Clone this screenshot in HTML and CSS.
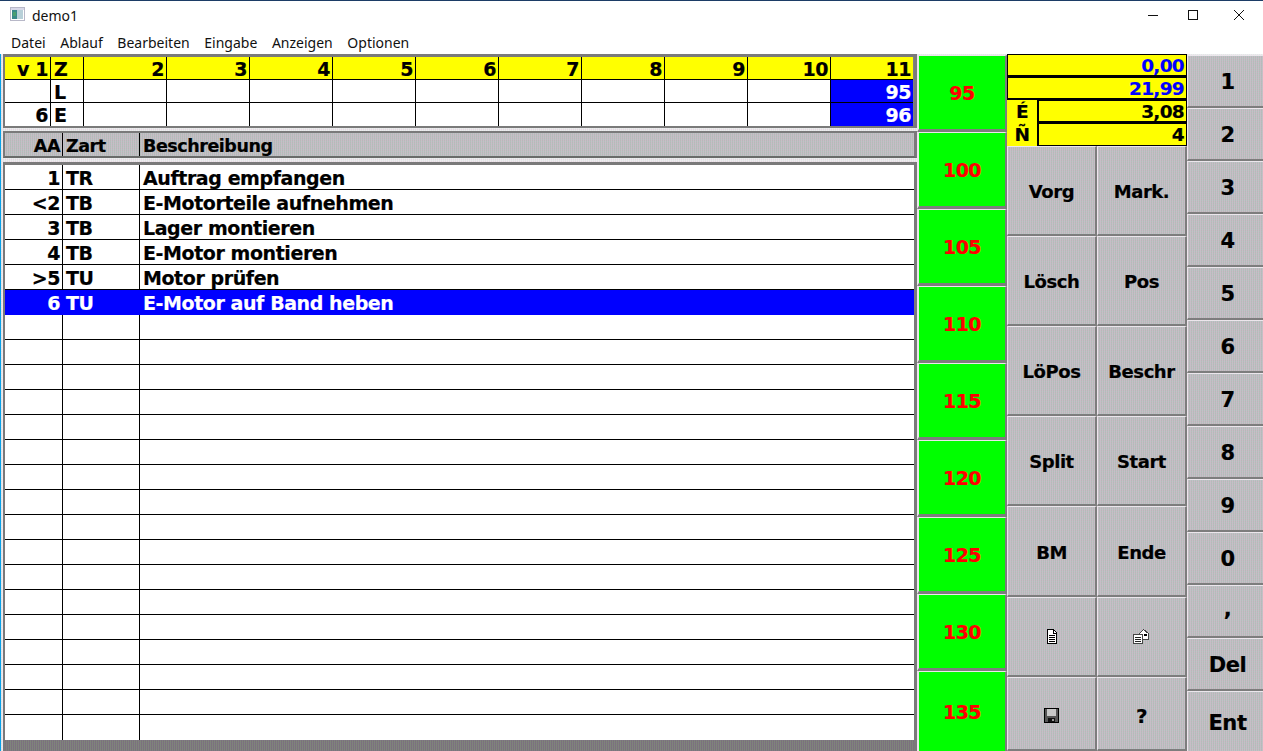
FILE: index.html
```html
<!DOCTYPE html>
<html lang="de">
<head>
<meta charset="utf-8">
<title>demo1</title>
<link rel="stylesheet" href="styles.css">
</head>
<body>
<div class="window">
  <header class="titlebar">
    <svg class="appicon" width="16" height="16" viewBox="0 0 16 16" shape-rendering="crispEdges"><rect x="0.5" y="0.5" width="14" height="13" fill="#fff" stroke="#b8b8c8"/><rect x="1" y="1" width="13" height="2" fill="#d8d8e8"/><rect x="2" y="3" width="5" height="9" fill="#3a8a8a"/><rect x="7" y="3" width="6" height="9" fill="#b8d0d8"/><rect x="3" y="5" width="3" height="4" fill="#4aa070"/></svg>
    <span class="apptitle">demo1</span>
    <div class="winctl">
      <svg width="12" height="12" viewBox="0 0 12 12" shape-rendering="crispEdges"><rect x="1" y="6" width="10" height="1" fill="#111"/></svg>
      <svg width="12" height="12" viewBox="0 0 12 12" shape-rendering="crispEdges"><rect x="1.5" y="1.5" width="9" height="9" fill="none" stroke="#111"/></svg>
      <svg width="12" height="12" viewBox="0 0 12 12"><path d="M1 1L11 11M11 1L1 11" stroke="#111" stroke-width="1"/></svg>
    </div>
  </header>
  <nav class="menubar"><span>Datei</span><span>Ablauf</span><span>Bearbeiten</span><span>Eingabe</span><span>Anzeigen</span><span>Optionen</span></nav>
  <main class="main">
    <section class="left">
      <div class="panel toppanel">
        <div class="tgrid">
          <div class="c y r">v 1</div><div class="c y">Z</div><div class="c y r">2</div><div class="c y r">3</div><div class="c y r">4</div><div class="c y r">5</div><div class="c y r">6</div><div class="c y r">7</div><div class="c y r">8</div><div class="c y r">9</div><div class="c y r">10</div><div class="c y r">11</div>
          <div class="c"></div><div class="c">L</div><div class="c"></div><div class="c"></div><div class="c"></div><div class="c"></div><div class="c"></div><div class="c"></div><div class="c"></div><div class="c"></div><div class="c"></div><div class="c b r">95</div>
          <div class="c r">6</div><div class="c">E</div><div class="c"></div><div class="c"></div><div class="c"></div><div class="c"></div><div class="c"></div><div class="c"></div><div class="c"></div><div class="c"></div><div class="c"></div><div class="c b r">96</div>
        </div>
      </div>
      <div class="panel headpanel">
        <div class="row head"><div class="r">AA</div><div>Zart</div><div>Beschreibung</div></div>
      </div>
      <div class="panel datapanel">
        <div class="row"><div class="r">1</div><div>TR</div><div>Auftrag empfangen</div></div>
        <div class="row"><div class="r">&lt;2</div><div>TB</div><div>E-Motorteile aufnehmen</div></div>
        <div class="row"><div class="r">3</div><div>TB</div><div>Lager montieren</div></div>
        <div class="row"><div class="r">4</div><div>TB</div><div>E-Motor montieren</div></div>
        <div class="row"><div class="r">&gt;5</div><div>TU</div><div>Motor prüfen</div></div>
        <div class="row sel"><div class="r">6</div><div>TU</div><div>E-Motor auf Band heben</div></div>
        <div class="row"><div></div><div></div><div></div></div>
        <div class="row"><div></div><div></div><div></div></div>
        <div class="row"><div></div><div></div><div></div></div>
        <div class="row"><div></div><div></div><div></div></div>
        <div class="row"><div></div><div></div><div></div></div>
        <div class="row"><div></div><div></div><div></div></div>
        <div class="row"><div></div><div></div><div></div></div>
        <div class="row"><div></div><div></div><div></div></div>
        <div class="row"><div></div><div></div><div></div></div>
        <div class="row"><div></div><div></div><div></div></div>
        <div class="row"><div></div><div></div><div></div></div>
        <div class="row"><div></div><div></div><div></div></div>
        <div class="row"><div></div><div></div><div></div></div>
        <div class="row"><div></div><div></div><div></div></div>
        <div class="row"><div></div><div></div><div></div></div>
        <div class="row"><div></div><div></div><div></div></div>
        <div class="row"><div></div><div></div><div></div></div>
      </div>
    </section>
    <section class="greens">
      <button class="gbtn">95</button><button class="gbtn">100</button><button class="gbtn">105</button><button class="gbtn">110</button><button class="gbtn">115</button><button class="gbtn">120</button><button class="gbtn">125</button><button class="gbtn">130</button><button class="gbtn gbtn-last">135</button>
    </section>
    <section class="mid">
      <div class="info">
        <div class="irow blue">0,00</div>
        <div class="irow blue">21,99</div>
        <div class="isplit"><span class="ilabel">É</span><span class="ival">3,08</span></div>
        <div class="isplit"><span class="ilabel">Ñ</span><span class="ival">4</span></div>
      </div>
      <div class="keys">
        <button class="btn k5">Vorg</button><button class="btn k5">Mark.</button>
        <button class="btn k5">Lösch</button><button class="btn k5">Pos</button>
        <button class="btn k5">LöPos</button><button class="btn k5">Beschr</button>
        <button class="btn k5">Split</button><button class="btn k5">Start</button>
        <button class="btn k5">BM</button><button class="btn k5">Ende</button>
        <button class="btn" aria-label="Neu"><svg width="12" height="16" viewBox="0 0 12 16" shape-rendering="crispEdges"><path d="M1.5 .5H7.5L10.5 3.5V14.5H1.5Z" fill="#fff" stroke="#000"/><path d="M7 1V4H10" fill="none" stroke="#000"/><path d="M3 6H9M3 8H9M3 10H9M3 12H9" stroke="#000"/></svg></button>
        <button class="btn" aria-label="Öffnen"><svg width="17" height="16" viewBox="0 0 17 16" shape-rendering="crispEdges"><path d="M5.5 5.5L10.5 .5L15.5 4.5V10.5H5.5Z" fill="#fff" stroke="#444"/><rect x="11" y="5" width="3" height="2" fill="#000"/><rect x=".5" y="5.5" width="9" height="9" fill="#fff" stroke="#444"/><path d="M2 8H8M2 10H8M2 12H8" stroke="#222"/></svg></button>
        <button class="btn k6" aria-label="Speichern"><svg width="15" height="15" viewBox="0 0 15 15" shape-rendering="crispEdges"><rect x=".5" y=".5" width="14" height="14" fill="#555" stroke="#000"/><rect x="3" y="1" width="9" height="7" fill="#c8c8c8"/><rect x="4" y="10" width="7" height="4" fill="#111"/><rect x="8" y="11" width="2" height="2" fill="#999"/></svg></button>
        <button class="btn k6 help">?</button>
      </div>
    </section>
    <section class="pad">
      <button class="btn">1</button><button class="btn">2</button><button class="btn">3</button><button class="btn">4</button><button class="btn">5</button><button class="btn">6</button><button class="btn">7</button><button class="btn">8</button><button class="btn">9</button><button class="btn">0</button><button class="btn comma">,</button><button class="btn">Del</button><button class="btn ent">Ent</button>
    </section>
  </main>
</div>
</body>
</html>
```
FILE: styles.css
```css
* { box-sizing: border-box; }
html, body { margin: 0; padding: 0; height: 100%; overflow: hidden; background: #fff; }
body { font-family: "DejaVu Sans", sans-serif; }
.window {
  width: 1263px; height: 751px; display: flex; flex-direction: column;
  border-top: 1px solid #1c3c66; overflow: hidden; background: #fff;
}
.titlebar { height: 29px; flex: none; display: flex; align-items: center; padding-left: 10px; font-family: "Noto Sans", sans-serif; }
.appicon { margin-top: -1px; }
.apptitle { margin-left: 6px; font-size: 14px; color: #111; }
.winctl { margin-left: auto; display: flex; gap: 28px; padding-right: 18px; margin-top: -2px; }
.winctl svg:nth-child(2) { margin-right: 6px; }
.menubar { height: 24px; flex: none; display: flex; gap: 14.6px; padding: 1px 0 0 11px; font: 14px/24px "Noto Sans", sans-serif; color: #111; }
.main {
  flex: 1; min-height: 0; display: flex; padding-left: 3px; overflow: hidden;
  background:
    linear-gradient(90deg, rgba(255,235,250,.5) 50%, transparent 50%) 0 0 / 2px 2px,
    linear-gradient(rgba(225,245,235,.5) 50%, transparent 50%) 0 0 / 2px 2px,
    #e0dde0;
  box-shadow: inset 1px 0 #0aa0e8;
}
.left { width: 914px; flex: none; display: flex; flex-direction: column; font-weight: 700; font-size: 19px; letter-spacing: -.42px; color: #000; -webkit-text-stroke: .2px currentColor; }
.panel { background: #808080; border-style: solid; border-color: #7a7a7a; border-width: 2px 3px 2px 2px; }
.toppanel { border-top-width: 3px; border-bottom-width: 3px; height: 74px; flex: none; }
.tgrid { display: grid; grid-template-columns: 46px 33px repeat(9, 83px) 82px; grid-auto-rows: 23px; width: 908px; background: #fff; }
.c { border-right: 1px solid #000; border-bottom: 1px solid #000; padding: 0 3px; line-height: 24px; overflow: hidden; white-space: nowrap; background: #fff; }
.c:nth-child(12n) { border-right: 0; }
.c:nth-last-child(-n+12) { border-bottom: 0; }
.c.y { background: #ff0; }
.c.b { background: #00f; color: #fff; }
.r { text-align: right; }
.c.r { padding-right: 2px; }
.headpanel { margin-top: 3px; height: 27px; flex: none; border-bottom-color: #6a6a6a; }
.row { display: grid; grid-template-columns: 58px 77px 1fr; height: 25px; border-bottom: 1px solid #000; background: #fff; line-height: 26px; overflow: hidden; white-space: nowrap; }
.row > div { border-right: 1px solid #000; padding: 0 2px 0 3px; overflow: hidden; }
.row > div:last-child { border-right: 0; }
.row:last-child { border-bottom: 0; }
.row.sel { background: #00f; color: #fff; border-bottom-color: #00f; }
.row.sel > div { border-right-color: #00f; }
.row.head {
  height: 23px; border-bottom: 0; line-height: 27px; font-size: 17.5px; letter-spacing: -.45px;
  background:
    linear-gradient(90deg, rgba(214,192,210,.55) 50%, transparent 50%) 0 0 / 2px 2px,
    linear-gradient(rgba(172,198,190,.55) 50%, transparent 50%) 0 0 / 2px 2px,
    #b8b8b8;
}
.datapanel {
  margin-top: 4px; flex: 1; border-top-width: 3px; border-bottom: 0;
  background:
    linear-gradient(90deg, rgba(120,100,125,.55) 50%, transparent 50%) 0 0 / 2px 2px,
    linear-gradient(rgba(125,140,115,.55) 50%, transparent 50%) 0 0 / 2px 2px,
    #808080;
}
.greens { width: 90px; flex: none; display: flex; flex-direction: column; margin-top: 1px; }
.gbtn, .btn {
  appearance: none; margin: 0; padding: 0; font: inherit; border-radius: 0; border-style: solid; border-width: 1px 2px 2px 1px;
  border-color: #ece6ec #7d7d7d #7d7d7d #ece6ec; display: flex; align-items: center; justify-content: center; font-weight: 700; color: #000; -webkit-text-stroke: .2px currentColor;
}
.gbtn { height: 77px; flex: none; background: #0f0; color: #f00; font-size: 19px; letter-spacing: -.5px; border-width: 1px 2px 3px 2px; }
.gbtn-last { height: auto; flex: 1; border-bottom-width: 0; }
.mid { width: 180px; flex: none; display: flex; flex-direction: column; }
.info { flex: none; height: 92px; display: flex; flex-direction: column; background: #ff0; font-weight: 700; font-size: 18.5px; letter-spacing: -.7px; -webkit-text-stroke: .2px currentColor; }
.irow, .isplit { height: 23px; flex: none; line-height: 22px; text-align: right; overflow: hidden; }
.irow { border: 1px solid #000; border-bottom-width: 2px; padding-right: 2px; }
.irow.blue { color: #00f; }
.isplit { display: flex; }
.ilabel { width: 30px; flex: none; text-align: center; line-height: 24px; }
.ival { flex: 1; border: 1px solid #000; border-left-width: 2px; border-top: 1px solid #000; padding-right: 2px; border-bottom-width: 2px; }
.isplit:last-child .ival { border-bottom-width: 1px; }
.keys { flex: 1; min-height: 0; display: grid; grid-template-columns: 90px 90px; grid-template-rows: 90px 90px 90px 90px 91px 80px 1fr; }
.btn {
  background:
    linear-gradient(90deg, rgba(214,192,210,.55) 50%, transparent 50%) 0 0 / 2px 2px,
    linear-gradient(rgba(172,198,190,.55) 50%, transparent 50%) 0 0 / 2px 2px,
    #b8b8b8;
  font-size: 18px; letter-spacing: -.45px;
}
.btn.k5 { padding-top: 2px; }
.btn.k6 { padding-top: 4px; }
.help { font-size: 20px; }
.pad { width: 82px; flex: none; display: flex; flex-direction: column; margin-top: 1px; }
.pad .btn { height: 53px; flex: none; font-size: 21px; letter-spacing: -.4px; padding-top: 1px; }
.pad .ent { height: 62px; padding-top: 2px; }
.pad .comma { align-items: flex-start; line-height: 44px; }
```
